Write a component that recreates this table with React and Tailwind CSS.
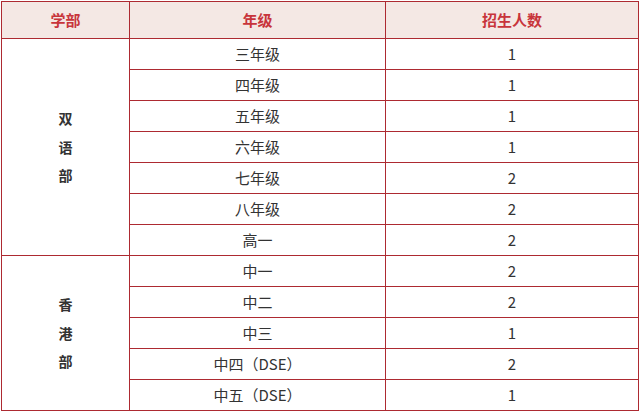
const bilingual = [
  ['三年级', 1],
  ['四年级', 1],
  ['五年级', 1],
  ['六年级', 1],
  ['七年级', 2],
  ['八年级', 2],
  ['高一', 2],
];

const hongkong = [
  ['中一', 2],
  ['中二', 2],
  ['中三', 1],
  ['中四（DSE）', 2],
  ['中五（DSE）', 1],
];

const cell = 'border border-[#ad2a31] text-center align-middle p-0';

function Section({ name, rows }) {
  return rows.map(([grade, count], i) => (
    <tr key={grade} className="h-[31px]">
      {i === 0 && (
        <td rowSpan={rows.length} className={`${cell} font-bold text-[14px] leading-[28.5px] text-[#333]`}>
          {name.split('').map((ch) => (
            <div key={ch}>{ch}</div>
          ))}
        </td>
      )}
      <td className={`${cell} text-[15px] text-[#333]`}>{grade}</td>
      <td className={`${cell} text-[15px] text-[#333]`}>{count}</td>
    </tr>
  ));
}

export default function App() {
  return (
    <div
      className="w-[639px] h-[412px] bg-white pl-[1px] pt-[1px]"
      style={{ fontFamily: '"Microsoft YaHei", "Noto Sans CJK SC", "Noto Sans", sans-serif' }}
    >
      <table className="border-collapse w-[637px] table-fixed">
        <colgroup>
          <col className="w-[128px]" />
          <col className="w-[256px]" />
          <col className="w-[253px]" />
        </colgroup>
        <thead>
          <tr className="h-[37px] bg-[#f4e8e4]">
            {['学部', '年级', '招生人数'].map((h) => (
              <th key={h} className={`${cell} text-[15px] font-bold text-[#c8353b]`}>
                {h}
              </th>
            ))}
          </tr>
        </thead>
        <tbody>
          <Section name="双语部" rows={bilingual} />
          <Section name="香港部" rows={hongkong} />
        </tbody>
      </table>
    </div>
  );
}
